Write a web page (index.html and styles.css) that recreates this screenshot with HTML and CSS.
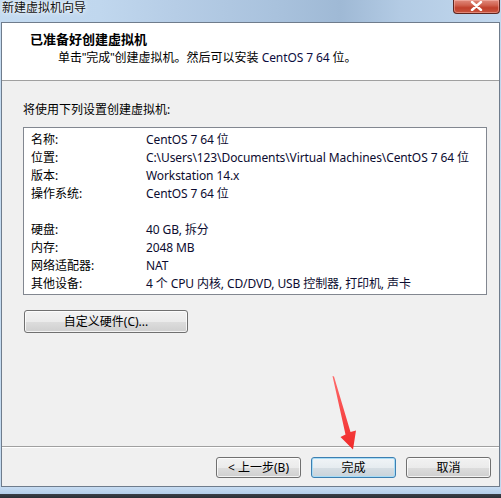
FILE: index.html
```html
<!DOCTYPE html>
<html>
<head>
<meta charset="utf-8">
<link rel="stylesheet" href="styles.css">
</head>
<body>
<div class="screen">
  <div class="titlebar">
    <span class="title">新建虚拟机向导</span>
    <div class="close">
      <svg width="13" height="10" viewBox="0 0 13 10"><path d="M2 1 L11 9 M11 1 L2 9" stroke="#fff" stroke-width="2.4" stroke-linecap="round"/></svg>
    </div>
  </div>
  <div class="window">
    <div class="header">
      <div class="h-title">已准备好创建虚拟机</div>
      <div class="h-sub">单击<span class="q">"</span>完成<span class="q">"</span>创建虚拟机。然后可以安装 <span class="lat">CentOS 7 64</span> 位。</div>
    </div>
    <div class="body">
      <div class="intro">将使用下列设置创建虚拟机:</div>
      <div class="summary">
        <div class="row"><span class="k">名称:</span><span class="v">CentOS 7 64 位</span></div>
        <div class="row"><span class="k">位置:</span><span class="v">C:\Users\123\Documents\Virtual Machines\CentOS 7 64 位</span></div>
        <div class="row"><span class="k">版本:</span><span class="v">Workstation 14.x</span></div>
        <div class="row"><span class="k">操作系统:</span><span class="v">CentOS 7 64 位</span></div>
        <div class="row"></div>
        <div class="row"><span class="k">硬盘:</span><span class="v">40 GB, 拆分</span></div>
        <div class="row"><span class="k">内存:</span><span class="v">2048 MB</span></div>
        <div class="row"><span class="k">网络适配器:</span><span class="v">NAT</span></div>
        <div class="row"><span class="k">其他设备:</span><span class="v">4 个 CPU 内核, CD/DVD, USB 控制器, 打印机, 声卡</span></div>
      </div>
      <button class="btn custom">自定义硬件(C)...</button>
    </div>
    <div class="footer">
      <button class="btn">&lt; 上一步(B)</button>
      <button class="btn default">完成</button>
      <button class="btn">取消</button>
    </div>
  </div>
  <div class="frame-bottom"></div>
  <svg class="arrow" width="501" height="498" viewBox="0 0 501 498">
    <defs>
      <linearGradient id="ag" x1="0" y1="0" x2="0" y2="1">
        <stop offset="0" stop-color="#ff6a6a"/>
        <stop offset="1" stop-color="#f02a2a"/>
      </linearGradient>
    </defs>
    <polygon points="332.5,376 334,376.5 350.5,432 356,430.5 353,449.5 340.5,437 345.5,434.5" fill="url(#ag)"/>
  </svg>
</div>
</body>
</html>
```
FILE: styles.css
```css
* { box-sizing: border-box; }
html, body { margin: 0; padding: 0; }
body {
  width: 501px;
  height: 498px;
  overflow: hidden;
  font-family: "Noto Sans", "Noto Sans CJK SC", sans-serif;
  font-size: 12px;
  color: #000;
}
.screen {
  position: relative;
  width: 501px;
  height: 498px;
  display: flex;
  flex-direction: column;
  background: linear-gradient(90deg, #c4dbf1 0%, #c0d7ee 20%, #b6cde6 35%, #a9c2dd 55%, #9fb9d5 68%, #b3cbe4 80%, #c2d8ee 100%);
}
.titlebar {
  height: 22px;
  flex: none;
  display: flex;
  justify-content: space-between;
  align-items: flex-start;
}
.title {
  padding: 1px 0 0 2px;
  line-height: 13px;
  font-size: 12px;
  color: #111;
  text-shadow: 0 0 6px rgba(255,255,255,0.9), 0 0 3px rgba(255,255,255,0.9);
}
.close {
  width: 47px;
  height: 14px;
  margin-right: 1px;
  border: 1px solid #5d2620;
  border-top: none;
  border-radius: 0 0 4px 4px;
  background: linear-gradient(#e08a7c 0%, #d0624f 40%, #c0402c 60%, #c8553f 100%);
  box-shadow: inset 0 0 0 1px rgba(255,200,190,0.45);
  display: flex;
  justify-content: center;
  align-items: flex-start;
  padding-top: 1px;
}
.window {
  flex: none;
  height: 465px;
  margin: 0 1px;
  border: 1px solid #6f7c8c;
  background: #f0f0f0;
  display: flex;
  flex-direction: column;
}
.header {
  flex: none;
  height: 58px;
  background: #fff;
  border-bottom: 1px solid #a0a0a0;
  padding: 8px 0 0 28px;
}
.h-title {
  font-size: 13px;
  font-weight: bold;
  line-height: 17px;
}
.h-sub {
  padding-left: 28px;
  line-height: 16px;
  margin-top: 2px;
}
.lat { color: #0c0c40; letter-spacing: -0.1px; }
.q { font-family: "Liberation Sans", sans-serif; }
.body {
  flex: 1;
  padding: 21px 0 0 21px;
}
.intro {
  line-height: 16px;
}
.summary {
  margin-top: 9px;
  width: 464px;
  height: 168px;
  background: #fff;
  border: 1px solid #828790;
  padding: 3px 0 0 7px;
}
.row {
  height: 18px;
  line-height: 18px;
  display: flex;
  white-space: nowrap;
}
.k { width: 115px; flex: none; }
.v { color: #0c0c30; letter-spacing: -0.1px; }
.btn {
  font-family: "Noto Sans", "Noto Sans CJK SC", sans-serif;
  font-size: 12px;
  color: #000;
  padding: 0;
  border: 1px solid #707070;
  border-radius: 3px;
  background: linear-gradient(#f2f2f2 0%, #ebebeb 50%, #dddddd 51%, #cfcfcf 100%);
  box-shadow: inset 0 0 0 1px rgba(255,255,255,0.75);
  line-height: 16px;
}
.custom {
  display: block;
  margin: 15px 0 0 1px;
  width: 164px;
  height: 23px;
}
.footer {
  flex: none;
  height: 40px;
  border-top: 1px solid #a0a0a0;
  box-shadow: inset 0 1px 0 #fff;
  padding: 10px 8px 0 0;
  display: flex;
  justify-content: flex-end;
  align-items: flex-start;
  gap: 10px;
}
.footer .btn {
  width: 85px;
  height: 21px;
}
.footer .default {
  border-color: #3c7fb1;
  box-shadow: inset 0 0 0 1px #a8dcf6;
  background: linear-gradient(#f0f4f7 0%, #e6ecf0 50%, #d6dee4 51%, #c9d3da 100%);
}
.frame-bottom {
  flex: 1;
  background: linear-gradient(#c7dcf2 0%, #b5cfea 60%, #3a4048 62%, #2b3036 100%);
}
.arrow {
  position: absolute;
  left: 0;
  top: 0;
  pointer-events: none;
}
```
